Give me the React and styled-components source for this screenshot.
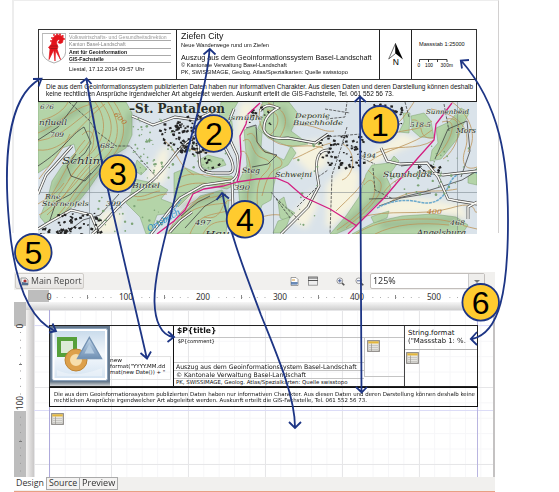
import React, { useLayoutEffect, useRef } from "react";
import styled, { createGlobalStyle } from "styled-components";

const NAVY = "#1d3585";
const SANS = '"Liberation Sans", Arial, sans-serif';
const UI = '"DejaVu Sans", sans-serif';
const HUMANIST = '"Open Sans", sans-serif';

const Global = createGlobalStyle`
  body { margin: 0; background: #fff; }
  * { box-sizing: border-box; }
  svg { display: block; }
`;

const Page = styled.main`
  position: relative;
  width: 559px;
  height: 492px;
  overflow: hidden;
  background: #fff;
  font-family: ${SANS};
  color: #111;
`;

/* ---------- text squeezed or stretched to a set width ---------- */
const Line = styled.span`
  display: block;
  width: max-content;
  white-space: pre;
  transform-origin: 0 50%;
  font-family: ${(p) => p.$font || SANS};
  font-size: ${(p) => p.$size}px;
  line-height: ${(p) => p.$lh}px;
  font-weight: ${(p) => (p.$bold ? 700 : 400)};
  color: ${(p) => p.$color || "#111"};
  margin-top: ${(p) => p.$gap || 0}px;
`;

function Text({ width, size, lh, children, ...rest }) {
  const ref = useRef(null);
  useLayoutEffect(() => {
    const el = ref.current;
    if (width) el.style.transform = `scaleX(${width / el.offsetWidth})`;
  }, [width]);
  return (
    <Line ref={ref} $size={size} $lh={lh} $bold={rest.bold} $color={rest.color} $font={rest.font} $gap={rest.gap}>
      {children}
    </Line>
  );
}

/* ---------- printed sheet ---------- */
const Sheet = styled.section`
  width: 487px;
  height: 233px;
  margin-left: 12px;
  padding: 28px 20px 0 25px;
  border: 1px solid #ededed;
  border-width: 1px 1px 0 2px;
  border-right-color: #d2d0d0;
`;
const Header = styled.header`
  display: grid;
  grid-template-columns: 138px 203px 32px 64px;
  grid-template-rows: 49px;
  width: 439px;
  height: 51px;
  margin-left: -1px;
  border: 1px solid #333;
`;
const HeaderCell = styled.div`
  border-right: ${(p) => (p.$last ? 0 : 1)}px solid #222;
  padding: ${(p) => p.$pad || 0};
  display: ${(p) => (p.$row ? "flex" : "block")};
  gap: 3px;
  min-width: 0;
`;
const Office = styled.div`
  width: 102px;
`;
const OfficeRow = styled.div`
  height: 7.3px;
  border-top: 1px solid #aaa;
`;
const ScaleLabel = styled.div`
  padding-left: 4px;
`;
const BarSlot = styled.div`
  margin-top: 9px;
`;
const Disclaimer = styled.div`
  width: 439px;
  height: 22px;
  margin-left: -1px;
  padding: 4px 0 0 7px;
  border: 1px solid #222;
  border-top: 0;
`;
const MapSvg = styled.svg`
  width: 439px;
  height: 132px;
  margin-left: -1px;
`;

/* ---------- report designer ---------- */
const Editor = styled.section`
  width: 481px;
  height: 220px;
  margin: 39px 0 0 14px;
  overflow: hidden;
  background: #fff;
`;
const Toolbar = styled.div`
  display: flex;
  align-items: center;
  height: 18px;
  padding-left: 1px;
  background: #f1f0ee;
`;
const ReportButton = styled.div`
  display: flex;
  align-items: center;
  gap: 2px;
  width: 69px;
  height: 16px;
  padding-left: 4px;
  border: 1px solid #cfccc8;
  border-radius: 2px;
  background: linear-gradient(#f6f5f4, #e6e4e2);
`;
const ToolIcon = styled.svg`
  flex: none;
  width: ${(p) => p.$w}px;
  height: ${(p) => p.$w}px;
  margin-left: ${(p) => p.$ml || 0}px;
`;
const ZoomBox = styled.div`
  display: flex;
  width: 115px;
  height: 16px;
  margin-left: 6px;
  border: 1px solid #c2bebb;
  border-radius: 2px;
  background: #fff;
`;
const ZoomValue = styled.div`
  flex: 1;
  padding-left: 2px;
`;
const DropButton = styled.div`
  width: 16px;
  padding: 6px 0 0 5px;
  border-left: 1px solid #ccc;
  background: #efeeec;
  &::after {
    content: "";
    display: block;
    width: 0;
    border: 3px solid transparent;
    border-top-color: #777;
  }
`;
const TopRuler = styled.div`
  display: flex;
  height: 12px;
  padding-left: 14px;
  overflow: hidden;
`;
const RulerMargin = styled.div`
  flex: none;
  width: 21px;
  height: 12px;
  background: #bdbdbd;
`;
const Mark = styled.div`
  flex: none;
  width: 77px;
  height: 12px;
  background:
    linear-gradient(#888, #888) 38px 5px / 1px 4px no-repeat,
    linear-gradient(90deg, #aaa 1px, transparent 1px) 7.7px 7px / 7.7px 1px repeat-x;
`;
const MarkLabel = styled.span`
  display: block;
  width: max-content;
  padding: 0 2px;
  transform: translateX(-50%);
  font: 8.3px/13px "Noto Sans", sans-serif;
  color: #333;
  background: ${(p) => (p.$clear ? "transparent" : "#fff")};
`;
const Workspace = styled.div`
  display: flex;
  height: 175px;
`;
const SideRuler = styled.div`
  flex: none;
  width: 12px;
  overflow: hidden;
  background: linear-gradient(#bdbdbd 24px, #fff 24px 109px, #bdbdbd 109px);
  padding-top: 24px;
`;
const SideMark = styled.div`
  width: 12px;
  height: 77px;
  background:
    linear-gradient(#777, #777) 5px 38px / 3px 1px no-repeat,
    linear-gradient(transparent 7px, #999 7px) 6px 7px / 1px 7.7px repeat-y;
`;
const SideLabel = styled.span`
  display: block;
  width: 12px;
  height: max-content;
  writing-mode: vertical-rl;
  transform: translateY(-50%) rotate(180deg);
  font: 8.3px/12px "Noto Sans", sans-serif;
  color: #333;
  background: ${(p) => p.$bg};
`;
const Desk = styled.div`
  flex: 1;
  display: grid;
  grid-template-columns: 8px 459px 2px;
  grid-template-rows: 8px 167px;
  background: #c4c2c2;
`;
const TopShade = styled.div`
  grid-column: 1 / -1;
  background: linear-gradient(#f7f7f7, #cecece);
`;
const LeftShade = styled.div`
  background: linear-gradient(90deg, #f4f3f2, #c9c7c7);
`;
const Paper = styled.div`
  padding: 15px 0 0 15px;
  background:
    linear-gradient(#aeaadb, #aeaadb) 15px 0 / 1px 100% no-repeat,
    linear-gradient(#b9b5e0, #b9b5e0) 443px 0 / 1px 100% no-repeat,
    linear-gradient(#dcdcf7, #dcdcf7) 0 100px / 100% 1px no-repeat,
    linear-gradient(#dcdcf7, #dcdcf7) 0 15px / 100% 1px no-repeat,
    linear-gradient(90deg, #e6e6e8 1px, transparent 1px) 0 0 / 77px 100%,
    linear-gradient(#e6e6e8 1px, transparent 1px) 0 0 / 100% 77px,
    linear-gradient(90deg, #f6f6f8 1px, transparent 1px) 0 0 / 15.4px 100%,
    linear-gradient(#f6f6f8 1px, transparent 1px) 0 0 / 100% 15.4px,
    #fff;
`;
const Band = styled.div`
  display: grid;
  grid-template-columns: 124px 231px 72px;
  grid-template-rows: 60px;
  width: 429px;
  height: 62px;
  border: 1px solid #222;
`;
const LogoCell = styled.div`
  display: flex;
  border-right: 1px solid #111;
  overflow: hidden;
`;
const LogoSlot = styled.div`
  flex: none;
  width: 60px;
  height: 60px;
`;
const DateField = styled.div`
  width: 61px;
  height: 24px;
  margin-top: 30px;
  border: 1px solid #e2e2e2;
  border-left: 0;
`;
const TitleCell = styled.div`
  display: grid;
  grid-template-rows: 12px 48px;
  border-right: 1px solid #444;
`;
const TitleField = styled.div`
  padding-left: 3px;
  border-bottom: 1px solid #c4c4c4;
`;
const CellBody = styled.div`
  display: grid;
  grid-template-columns: 190px 1fr;
`;
const Fields = styled.div`
  display: grid;
  grid-template-rows: 25px 8px 8px 7px;
`;
const Field = styled.div`
  padding-left: 2px;
  border-bottom: ${(p) => (p.$open ? 0 : 1)}px solid #c4c4c4;
  min-height: 0;
`;
const SubReport = styled.div`
  height: ${(p) => p.$h}px;
  padding: 2px;
  border: 1px solid #c4c4c4;
  border-top: 0;
  border-right: 0;
`;
const FormatField = styled.div`
  height: 24px;
  padding: 3px 0 0 3px;
  border-bottom: 1px solid #b5b5b5;
`;
const IconSlot = styled.div`
  padding: 2px 1px;
`;
const Notice = styled.div`
  width: 429px;
  height: 20px;
  padding: 3px 0 0 4px;
  border: 1px solid #111;
`;
const DetailBand = styled.div`
  padding: 6px 0 0 2px;
`;
const Tabs = styled.div`
  display: flex;
  height: 15px;
  background: #f1f0ee;
  border-bottom: 1.5px solid #e8a083;
`;
const Tab = styled.div`
  width: ${(p) => p.$w}px;
  height: 13px;
  padding-left: 2px;
  border-right: 1px solid #aaa;
  border-bottom: 1px solid #aaa;
  border-top: ${(p) => (p.$active ? 0 : 1)}px solid #aaa;
  border-bottom-width: ${(p) => (p.$active ? 0 : 1)}px;
  background: ${(p) => (p.$active ? "#fff" : "#f4f3f2")};
`;
const Overlay = styled.svg`
  position: absolute;
  left: 0;
  top: 0;
  pointer-events: none;
`;

const Crest = () => (
  <svg width="24" height="31" viewBox="42 33 24 31">
    <path d="M42.3 33.4H65.7V52Q65 60 54 63Q43 60 42.3 52Z" fill="#fff" stroke="#999" strokeWidth=".8" />
    <path d="M55 61L53.7 50L49 59.5L50 49L48.5 47.5L51.5 44Q52 37 56 35.3Q61 34 63.5 38L62.5 42.5Q60 44.5 58 42.5L60 40Q57 38.5 56.5 43L58 47L57 49L60.5 59.5L55.5 50.5Z" fill="#e3131b" stroke="#e3131b" strokeWidth=".7" />
    <path d="M50 46h8M50.5 48.5h7" stroke="#7e1717" strokeWidth=".6" />
    {[[54, 35], [57, 34.3], [60, 34.5], [62.8, 36], [64, 39], [52, 38], [51, 41]].map(([x, y]) => (
      <circle key={x} cx={x} cy={y} r=".9" fill="#e3131b" />
    ))}
  </svg>
);

const NorthArrow = () => (
  <svg width="31" height="49" viewBox="380 30 31 49">
    <path d="M395.5 43.5L388.7 59L395.5 53.5Z" fill="#fff" stroke="#333" strokeWidth=".7" />
    <path d="M395.5 43L403 59.5L395.5 53.5Z" fill="#000" />
    <text x="395.7" y="65" fontSize="8.5" textAnchor="middle" fontFamily={SANS}>N</text>
  </svg>
);

const ScaleBar = () => (
  <svg width="45" height="12" viewBox="415 57 45 12">
    <path d="M419.5 62V59.5H447V62M428.5 59.5V62M437.5 59.5V62" fill="none" stroke="#222" strokeWidth=".9" />
    <g fontSize="4.8" fontFamily={SANS}>
      <text x="417.5" y="67.2">0</text>
      <text x="425" y="67.2">100</text>
      <text x="440.5" y="67.2" textLength="12.5">300m</text>
    </g>
  </svg>
);

const TableIcon = () => (
  <svg width="13" height="12" viewBox="0 0 13 12">
    <rect x=".7" y=".7" width="11.6" height="10.6" fill="#efefec" stroke="#8a8783" strokeWidth="1.2" />
    <path d="M1.3 1.3h10.4v2.2H1.3z" fill="#e3b63c" />
    <path d="M2 5.3h9M2 7.3h9M2 9.3h9" stroke="#aaa9a2" strokeWidth=".7" />
    <path d="M4.5 3.5V11" stroke="#96948e" strokeWidth=".7" />
  </svg>
);

const ShapesLogo = () => (
  <svg width="60" height="60" viewBox="50 326 60 60">
    <defs>
      <linearGradient id="panel" x2="0" y2="1"><stop stopColor="#cadcec" /><stop offset=".5" stopColor="#f4f8fc" /><stop offset="1" stopColor="#d5e4f2" /></linearGradient>
      <linearGradient id="ice" x2="0" y2="1"><stop stopColor="#c3d7ea" /><stop offset="1" stopColor="#6f90b4" /></linearGradient>
      <linearGradient id="fade" x2="0" y2="1"><stop stopColor="#71818f" /><stop offset="1" stopColor="#d2d4d7" /></linearGradient>
      <filter id="soft"><feGaussianBlur stdDeviation=".6" /></filter>
    </defs>
    <rect x="49" y="326" width="61" height="57" fill="#667a90" />
    <rect x="49" y="382" width="61" height="4" fill="url(#fade)" />
    <g filter="url(#soft)">
      <rect x="52" y="328.5" width="55.5" height="52" rx="2" fill="#fff" stroke="#8aa2bb" strokeWidth="1" />
      <rect x="54.5" y="331" width="50.5" height="47" fill="url(#panel)" />
      <rect x="59" y="339" width="16" height="16" fill="#dcebd6" stroke="#56a03b" strokeWidth="4" />
      <circle cx="76" cy="360" r="8.5" fill="#f7deac" stroke="#dda04b" strokeWidth="5" />
      <circle cx="76" cy="360" r="11" fill="none" stroke="#bd8433" strokeWidth="1" />
      <path d="M89.3 337.5L77.5 358.5H101.5Z" fill="url(#ice)" stroke="#7493b4" strokeWidth="1.4" />
      <path d="M89.3 344L84.5 353.5H94.5Z" fill="#b5cce1" />
      <path d="M57 370Q75 379 102 368V376H57Z" fill="#fff" opacity=".35" />
    </g>
  </svg>
);

/* ---------- topographic map ---------- */
const FORESTS = [
  "M38 101H126L132 112L132 134L126 147L113 155L101 170L88 189L79 200L62 214L45 222L40 216L48 196L52 180L62 165L76 151L74 143L62 147L50 164L38 172Z",
  "M134 178L158 183L168 189L161 198L174 203L164 213L157 214L150 233H146L140 216L126 202L131 192Z",
  "M137 159L147 168L141 174L134 169Z",
  "M174 172L186 167L206 176L232 175L236 183L227 188L207 184L190 194L178 206L174 199Z",
  "M200 195L222 189L229 200L226 233H166L178 218Z",
  "M244 129L254 125L262 132L261 147L284 159L291 145L296 152L288 164L277 170L273 188L271 199L262 204L258 216L260 221L248 217L240 206L238 182L247 164Z",
  "M262 101H289L299 114L291 130L302 138L308 143L290 146L268 137L258 127L264 112Z",
  "M197 160L208 154L223 158L226 164L210 169L202 166Z",
  "M221 101H238L231 113L233 130L226 138L219 117Z",
  "M278 200L284 196L287 207L295 212L286 220L280 217Z",
  "M278 220L290 216L284 232H273Z",
  "M372 164L389 162L394 155L399 160L392 170L385 173L391 186L385 196L374 205L356 224L336 233H330L346 215L359 196L366 173Z",
  "M352 233L375 221L402 215L433 213L456 216L468 224L462 233Z",
  "M379 213L389 210L387 217L374 222L371 216Z",
  "M411 115L424 112L431 120L434 137L420 136L412 129Z",
  "M436 127L449 121L461 107L469 112L464 122L458 137L449 148L441 158L430 160L432 149L438 142Z",
  "M468 176L477 167V184L468 182Z",
  "M403 112H410L409 132L399 131L404 121Z",
];
const PALE = [
  "M146 178L160 150L169 144L166 177L160 184Z",
  "M93 233L104 209L123 212L115 233Z",
  "M240 101H257L247 121L241 137L234 153Z",
  "M362 165L380 146L402 132L420 140L402 148L377 162Z",
  "M372 205L402 196L430 198L463 205L468 219L433 212L390 216Z",
  "M289 218L315 187L317 206L306 228Z",
  "M326 184L345 165L360 171L356 203L333 226H326Z",
  "M294 143L322 138L328 163L312 173L296 158Z",
  "M180 205L200 190L183 186L171 195Z",
];
const CONTOURS = [
  "M38 132C58 124 69 109 91 103M38 140C65 136 77 116 98 105M38 149C65 152 80 122 105 103M108 101C124 126 119 147 97 164C78 178 75 199 52 220M114 101C131 126 124 145 104 165C85 182 77 199 60 216M101 101C118 123 113 143 92 159C71 179 67 196 47 214M95 101C110 122 104 142 87 156C71 171 67 187 49 205M49 198C63 177 71 154 85 139M42 119C55 116 65 108 68 101M39 178C49 164 62 151 70 133M82 134C90 125 97 133 92 148C83 163 75 167 68 180M54 203C73 188 79 176 93 162M88 101C99 119 96 137 79 153",
  "M180 220C190 197 209 198 222 194M175 227C187 205 207 204 227 202M190 233C198 212 214 214 227 210M203 233C210 220 219 221 226 220M168 233C176 212 191 198 214 192",
  "M178 178C193 167 216 178 232 178M175 188C196 178 207 184 225 183M137 199C149 200 157 193 167 193M134 195C143 198 153 190 160 190",
  "M247 134C257 127 255 147 265 151C277 154 286 160 280 166C269 169 266 180 262 195M243 140C253 133 250 151 260 156C271 160 274 163 264 173C257 178 256 195 258 209M240 151C248 146 251 166 251 176C247 188 247 199 249 211M267 109C284 111 278 128 270 134M268 102C288 109 289 121 280 136M262 103C255 116 261 136 280 143C298 148 309 142 323 147M293 158C306 153 315 146 331 142",
  "M364 184C374 171 378 188 372 199C364 208 351 220 337 229M368 169C378 180 385 179 379 193C370 209 356 218 346 227M336 210C350 196 360 188 365 177M376 152C396 142 415 151 434 139M369 161C385 148 413 145 432 129M381 139C400 125 417 133 432 120M384 191C401 168 420 177 436 166M390 201C414 185 432 193 457 188M412 119C426 117 415 139 433 137M442 121C461 115 450 143 437 155M447 118C467 114 459 148 443 158M431 108C456 113 473 126 465 149C460 164 467 170 477 166M452 101C468 112 479 134 468 151M414 101C401 121 396 126 380 133",
  "M359 217C388 207 422 216 451 207S472 213 477 211M356 233C378 218 406 218 427 218C449 218 454 223 477 228M375 233C395 223 420 221 449 224",
  "M38 203C45 198 55 195 64 182M39 214C48 209 50 206 57 201M165 140C177 149 178 165 194 174M180 145C196 150 213 156 221 146M204 216C225 221 219 199 231 199M232 217C243 231 258 211 280 214M292 124C316 122 321 132 334 130M343 143C358 152 354 175 342 179",
];
const ROADS = [
  "M92 233C109 219 116 205 130 196C151 182 156 178 173 156C184 141 199 132 220 121",
  "M198 143L200 165Q202 171 212 172L229 172Q236 171 231 158L221 139L234 108",
  "M151 233L169 210L180 197L203 184L231 180Q241 175 237 154L225 128",
  "M232 180L234 233M170 231L180 220L192 211",
  "M260 110Q266 101 278 107Q263 115 264 129Q268 139 288 137L315 142L328 133",
  "M328 149Q314 149 317 173L319 185Q313 196 308 206L281 233",
  "M381 147L387 160L400 163L427 162L438 176L448 198L458 200L477 203",
  "M477 170L443 174L428 171M477 201L468 206V218",
  "M38 193L46 174L56 163L72 145M38 228L48 222L71 209L91 214L99 233M132 115L153 124L175 116L195 119L217 109",
];
const TRACKS = [
  "M38 139L58 126L77 101M38 165C67 146 69 135 84 126L91 142L85 152L73 162M100 163L85 180L71 175L67 165L76 153M49 222L56 201L71 193L91 172M65 233L83 219L100 214L119 193",
  "M69 101L89 119L96 130L116 145L130 145L143 161L158 178",
  "M246 127L256 124L257 141L265 151L277 154L268 163L252 166M185 227L205 205L226 193M181 215L198 201L210 195",
  "M326 118L345 116L347 101M347 126L341 147L332 174L330 233M325 136L361 133M359 156L375 163M373 167L375 189L393 198",
  "M435 158L448 128L467 120L470 150L461 176M428 174L417 163L401 165M369 198L398 197L424 191L462 179L477 170M379 205L401 197L431 192",
  "M409 116L405 101M444 103L449 130M325 108L350 112M318 176L328 169M276 197L299 219M297 206L316 187M271 191L291 218",
];
function scatter(seed, n, x, y, w, h) {
  let s = seed;
  const next = () => (s = (s * 16807) % 2147483647) / 2147483647;
  return Array.from({ length: n }, () => [x + next() * w, y + next() * h, 1 + next() * 1.4, next() * 70 - 35]);
}
const HOUSES = [
  ...scatter(2101, 80, 176, 114, 30, 38),
  ...scatter(54321, 45, 159, 122, 38, 25),
  ...scatter(50077, 58, 326, 134, 38, 33),
  ...scatter(56111, 42, 371, 103, 30, 20),
  ...scatter(12345, 42, 57, 212, 43, 20),
  ...scatter(9191, 26, 39, 227, 46, 6),
  ...scatter(35353, 16, 248, 106, 24, 19),
  ...scatter(37123, 9, 203, 157, 16, 15),
  ...scatter(47474, 13, 414, 161, 26, 12),
  ...scatter(31415, 9, 318, 132, 12, 24),
];
const TREES = [
  ...scatter(87654, 55, 133, 116, 43, 61),
  ...scatter(90123, 24, 96, 196, 66, 35),
  ...scatter(67676, 18, 187, 140, 39, 34),
  ...scatter(68123, 26, 389, 171, 73, 23),
  ...scatter(77889, 14, 298, 140, 27, 87),
  ...scatter(32123, 15, 430, 140, 43, 37),
];
const LABELS = [
  ["–St. Pantaleon", 129, 111.5, 13, 96, 1], ["676", 40, 108, 6, 14], ["nfluell", 39, 124, 7.5, 28], ["709", 50, 136, 6.5, 14],
  ["682", 100, 146.5, 6.5, 15], ["600", 111, 116, 6.5, 15, 2], ["Schlim", 62, 163, 8.5, 42], ["Bintel", 132, 187, 7, 28],
  ["Rne.", 45, 198, 6.8, 18], ["Sternenfels", 42, 205, 6.8, 47], ["399", 106, 205, 6.5, 15], ["ismühle", 228, 118.5, 6.8, 35],
  ["Deponie", 295, 116.5, 6.7, 35], ["Buechholde", 293, 124, 6.7, 50], ["Steg", 242, 172, 7.5, 18], ["Schweini", 275, 176, 7, 37],
  ["390", 234, 189, 6.8, 16], ["497", 195, 224, 7, 16], ["Hau", 205, 235, 8, 25], ["494", 362, 157, 6, 14], ["Sunnenbeid", 426, 113, 6.5, 43],
  ["518.5", 410, 125.5, 6.5, 21], ["Mors", 456, 132, 8, 20], ["Sunnholde", 383, 175.5, 7.5, 49], ["400", 427, 213, 6.8, 15, 2],
  ["468", 450, 224, 6.5, 15], ["Angelsburg", 417, 233.5, 7.5, 49],
];

const TopoMap = () => (
  <MapSvg viewBox="38 101 439 132">
    <defs>
      <filter id="relief" x="-10%" y="-10%" width="120%" height="120%"><feGaussianBlur stdDeviation="3" /></filter>
    </defs>
    <rect x="38" y="101" width="439" height="132" fill="#dae3ea" />
    <g fill="#f6f3df" filter="url(#relief)">{PALE.map((d) => <path key={d} d={d} />)}</g>
    <g fill="#b4d4a8" stroke="#769b6b" strokeWidth=".45">{FORESTS.map((d) => <path key={d} d={d} />)}</g>
    <g fill="none" stroke="#516f50" strokeWidth="6" opacity=".28" filter="url(#relief)">
      <path d="M40 131L85 105M131 111L124 144L98 170L73 203M74 158L55 190M180 205L228 191M254 130L255 157L246 201M282 106L289 130M381 174L379 196L339 229M380 224L459 219M459 117L442 150" />
    </g>
    <g fill="none" stroke="#bd9459" strokeWidth=".8">{CONTOURS.map((d) => <path key={d} d={d} />)}</g>
    <g fill="none" stroke="#3b3b3b" strokeWidth=".75">{TRACKS.map((d, i) => <path key={d} d={d} strokeDasharray={i % 2 ? "3 1.2" : undefined} />)}</g>
    <path d="M38 191.5H477M89.5 101V233M273.5 101V233M457.5 101V233" stroke="#647078" strokeWidth=".7" opacity=".65" />
    <path d="M149 233L170 214L181 199M377 207Q398 196 419 201T448 186T477 172" fill="none" stroke="#6ba9cc" strokeWidth="1.5" strokeDasharray="3 .8" />
    <g fill="none" stroke="#444" strokeWidth="2.8">{ROADS.map((d) => <path key={d} d={d} />)}</g>
    <g fill="none" stroke="#fbfbf7" strokeWidth="1.5">{ROADS.map((d) => <path key={d} d={d} />)}</g>
    <g fill="#7da477">{TREES.map(([x, y, r], i) => <circle key={i} cx={x} cy={y} r={r / 1.8} />)}</g>
    <g fill="#242424">{HOUSES.map(([x, y, s, a], i) => <rect key={i} x={x} y={y} width={s + 0.5} height={s} transform={`rotate(${a} ${x} ${y})`} />)}</g>
    <g fill="none" stroke="#d31e80" strokeWidth="1.3">
      <path d="M260 102L248 113L246 123L240 135L241 153L239 174L237 181L223 185L204 188L193 193L185 209L174 220L157 233" />
      <path d="M237 181L257 178L276 177L288 182L304 196L330 208L357 225" />
      <path d="M452 102L436 123L434 139L417 158L385 196L348 233" />
    </g>
    <g fontFamily='"DejaVu Serif", "Liberation Serif", serif'>
      {LABELS.map(([text, x, y, size, length, kind]) => (
        <text key={text} x={x} y={y} fontSize={size} textLength={length} lengthAdjust="spacingAndGlyphs"
          fontStyle={kind === 1 ? "normal" : "italic"} fontWeight={kind === 1 ? 700 : 400}
          fill={kind === 2 ? "#b8722f" : "#292d2a"} stroke={kind === 2 ? "#d5dfc5" : "#dfe8dc"} strokeWidth={kind === 2 ? 0 : 0.7} paintOrder="stroke"
          transform={text === "600" ? "rotate(45 115 118)" : undefined}>{text}</text>
      ))}
      <text x="149" y="231" fontSize="8.5" fontStyle="italic" fill="#238bc0" transform="rotate(-30 149 231)" textLength="37">Orisbach</text>
    </g>
  </MapSvg>
);

/* ---------- callouts ---------- */
const ARROWS = [
  ["M360 97L361.5 391", "M354.5 102L360 96.5L366 102M356 387L361.7 392.5L367 387"],
  ["M209.5 50C207 90 185 155 175 197C166 235 154 274 154.5 302C155 321 161 335 173 337", "M203.5 54.5L209.8 49L215.5 54.5M168 331.5L174 337L167.5 342"],
  ["M86.5 79C97 150 122 250 146.5 357", "M80.5 83.5L86.5 78.5L91.5 84M140.5 353L147 358.5L151 351.5"],
  ["M222.5 193C228 230 248 280 261 315C275 350 295 395 295 427", "M216.5 200L222 193L229 198.5M289 422L295 428L301 422"],
  ["M40 79C6 98 4 165 9 222C13 270 24 317 55 331", "M33 79L41.5 78.8L38.5 86.5M49 332.5L56 331L52.5 323.5"],
  ["M461.5 61C500 105 508 160 508 220C508 290 500 333 472 339", "M469 60L460.8 60.5L462 68.5M477 332L470.8 339L477 345"],
];
const BADGES = [[380, 124.3], [213.8, 133.5], [118, 173.5], [245, 219.3], [33.3, 252.3], [480.7, 302.3]];

const Callouts = () => (
  <Overlay width="559" height="492" viewBox="0 0 559 492">
    <g fill="none" stroke={NAVY} strokeWidth="1.8">
      {ARROWS.map(([line, heads]) => <path key={line} d={line + heads} />)}
    </g>
    {BADGES.map(([x, y], i) => (
      <g key={i}>
        <circle cx={x} cy={y} r="18.3" fill="#ffcb2f" stroke={NAVY} strokeWidth="1.8" />
        <text x={x} y={y + 11.3} textAnchor="middle" fontFamily={SANS} fontSize="32" fill="#000">{i + 1}</text>
      </g>
    ))}
  </Overlay>
);

export default function App() {
  return (
    <Page>
      <Global />
      <Sheet>
        <Header>
          <HeaderCell $row $pad="3px 0 0 3px">
            <Crest />
            <Office>
              <OfficeRow><Text size={5.6} lh={7} width={98} color="#999">Volkswirtschafts- und Gesundheitsdirektion</Text></OfficeRow>
              <OfficeRow><Text size={5.6} lh={7} width={57} color="#888">Kanton Basel-Landschaft</Text></OfficeRow>
              <OfficeRow><Text size={5.6} lh={7} width={58} bold>Amt für Geoinformation</Text></OfficeRow>
              <OfficeRow><Text size={5.6} lh={7} width={35} bold>GIS-Fachstelle</Text></OfficeRow>
              <OfficeRow><Text size={5.6} lh={7} width={75} gap={3}>Liestal, 17.12.2014 09:57 Uhr</Text></OfficeRow>
            </Office>
          </HeaderCell>
          <HeaderCell $pad="1px 0 0 4px">
            <Text size={9.3} lh={10} width={42}>Ziefen City</Text>
            <Text size={5.8} lh={7} width={88} gap={1}>Neue Wanderwege rund um Ziefen</Text>
            <Text size={7.2} lh={8} width={191} gap={5}>Auszug aus dem Geoinformationssystem Basel-Landschaft</Text>
            <Text size={5.8} lh={7} width={106}>© Kantonale Verwaltung Basel-Landschaft</Text>
            <Text size={5.8} lh={7} width={167}>PK, SWISSIMAGE, Geolog. Atlas/Spezialkarten: Quelle swisstopo</Text>
          </HeaderCell>
          <HeaderCell><NorthArrow /></HeaderCell>
          <HeaderCell $last $pad="11px 0 0 3px">
            <ScaleLabel><Text size={5.6} lh={7} width={46}>Massstab 1:25000</Text></ScaleLabel>
            <BarSlot><ScaleBar /></BarSlot>
          </HeaderCell>
        </Header>
        <Disclaimer>
          <Text size={6.5} lh={6.7} width={427}>Die aus dem Geoinformationssystem publizierten Daten haben nur informativen Charakter. Aus diesen Daten und deren Darstellung können deshalb</Text>
          <Text size={6.5} lh={6.7} width={348}>keine rechtlichen Ansprüche irgendwelcher Art abgeleitet werden. Auskunft erteilt die GIS-Fachstelle, Tel. 061 552 56 73.</Text>
        </Disclaimer>
        <TopoMap />
      </Sheet>

      <Editor>
        <Toolbar>
          <ReportButton>
            <ToolIcon $w={9} viewBox="0 0 9 9">
              <path d="M1 1h5l2 2v5H1z" fill="#eee" stroke="#999" />
              <circle cx="5" cy="4" r="1.6" fill="#a33" /><path d="M2 5v3h6V6z" fill="#526f92" />
            </ToolIcon>
            <Text size={9} lh={14} width={51} font={HUMANIST} color="#444">Main Report</Text>
          </ReportButton>
          <ToolIcon $w={9} $ml={206} viewBox="0 0 9 9">
            <path d="M1 .5h5l2 2v6H1z" fill="#fff" stroke="#888" strokeWidth=".8" />
            <path d="M2 3h3" stroke="#d79c3d" /><path d="M1 6h7M2 5v3M4 5v3M6 5v3" stroke="#3964a0" />
          </ToolIcon>
          <ToolIcon $w={10} $ml={9} viewBox="0 0 10 10">
            <rect x=".5" y=".8" width="9" height="8.4" fill="#eee" stroke="#888" strokeWidth=".8" /><path d="M0 2h10M0 4.5h10" stroke="#555" />
          </ToolIcon>
          <ToolIcon $w={9} $ml={18} viewBox="0 0 9 9">
            <path d="M5.6 5.6L8.3 8.3" stroke="#555" strokeWidth="1.6" /><circle cx="3.8" cy="3.8" r="2.9" fill="#f8f8fb" stroke="#999" /><path d="M2 3.8h3.6M3.8 2v3.6" stroke="#384f88" strokeWidth=".9" />
          </ToolIcon>
          <ToolIcon $w={9} $ml={10} viewBox="0 0 9 9">
            <path d="M5.6 5.6L8.3 8.3" stroke="#555" strokeWidth="1.6" /><circle cx="3.8" cy="3.8" r="2.9" fill="#f8f8fb" stroke="#999" /><path d="M2 3.8h3.6" stroke="#384f88" strokeWidth=".9" />
          </ToolIcon>
          <ZoomBox>
            <ZoomValue><Text size={8.5} lh={14} width={23} font='"Noto Sans", sans-serif' color="#333">125%</Text></ZoomValue>
            <DropButton />
          </ZoomBox>
        </Toolbar>
        <TopRuler>
          <RulerMargin />
          {[0, 100, 200, 300, 400, 500].map((n) => <Mark key={n}><MarkLabel $clear={n === 0}>{n}</MarkLabel></Mark>)}
        </TopRuler>
        <Workspace>
          <SideRuler>
            <SideMark><SideLabel $bg="transparent">0</SideLabel></SideMark>
            <SideMark><SideLabel $bg="#fff">100</SideLabel></SideMark>
          </SideRuler>
          <Desk>
            <TopShade />
            <LeftShade />
            <Paper>
              <Band>
                <LogoCell>
                  <LogoSlot><ShapesLogo /></LogoSlot>
                  <DateField>
                    <Text size={5.4} lh={6.2} width={12} font={UI}>new</Text>
                    <Text size={5.4} lh={6.2} width={55} font={UI}>format("YYYY.MM.dd</Text>
                    <Text size={5.4} lh={6.2} width={55} font={UI}>mat(new Date()) + "</Text>
                  </DateField>
                </LogoCell>
                <TitleCell>
                  <TitleField><Text size={7.8} lh={10} width={39} bold font={UI}>{"$P{title}"}</Text></TitleField>
                  <CellBody>
                    <Fields>
                      <Field><Text size={5.4} lh={7} width={39} font={UI}>{" $P{comment}"}</Text></Field>
                      <Field><Text size={6.2} lh={7} width={181} font={UI}>Auszug aus dem Geoinformationssystem Basel-Landschaft</Text></Field>
                      <Field><Text size={6.2} lh={7} width={130} font={UI}>© Kantonale Verwaltung Basel-Landschaft</Text></Field>
                      <Field $open><Text size={5.4} lh={7} width={172} font={UI}>PK, SWISSIMAGE, Geolog. Atlas/Spezialkarten: Quelle swisstopo</Text></Field>
                    </Fields>
                    <SubReport $h={39}><TableIcon /></SubReport>
                  </CellBody>
                </TitleCell>
                <div>
                  <FormatField>
                    <Text size={7} lh={8} width={46} font={UI}>String.format</Text>
                    <Text size={7} lh={8} width={58} font={UI}>("Massstab 1: %.</Text>
                  </FormatField>
                  <IconSlot><TableIcon /></IconSlot>
                </div>
              </Band>
              <Notice>
                <Text size={5.5} lh={6.3} width={421} font={UI}>Die aus dem Geoinformationssystem publizierten Daten haben nur informativen Charakter. Aus diesen Daten und deren Darstellung können deshalb keine</Text>
                <Text size={5.5} lh={6.3} width={313} font={UI}>rechtlichen Ansprüche irgendwelcher Art abgeleitet werden. Auskunft erteilt die GIS-Fachstelle, Tel. 061 552 56 73.</Text>
              </Notice>
              <DetailBand><TableIcon /></DetailBand>
            </Paper>
          </Desk>
        </Workspace>
        <Tabs>
          <Tab $w={33} $active><Text size={8.8} lh={13} width={28} font={HUMANIST} color="#333">Design</Text></Tab>
          <Tab $w={33}><Text size={8.8} lh={11} width={28} font={HUMANIST} color="#333">Source</Text></Tab>
          <Tab $w={38}><Text size={8.8} lh={11} width={33} font={HUMANIST} color="#333">Preview</Text></Tab>
        </Tabs>
      </Editor>
      <Callouts />
    </Page>
  );
}
